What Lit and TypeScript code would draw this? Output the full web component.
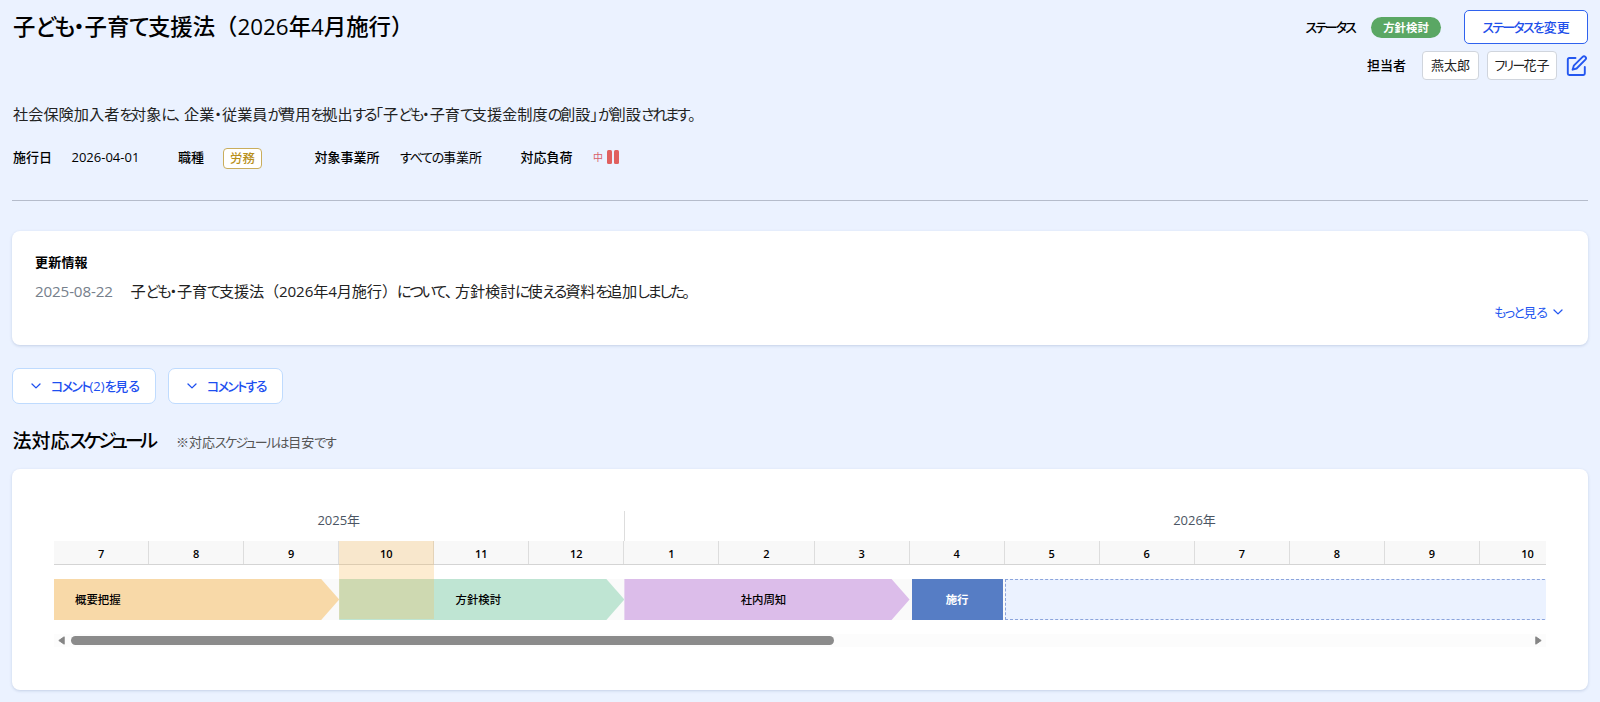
import { LitElement, html, css, svg } from "lit";
import { customElement } from "lit/decorators.js";
import { classMap } from "lit/directives/class-map.js";

// Kana and Japanese punctuation are set tighter than kanji, so each run gets its own span.
const RUNS = /([\u3040-\u309f]+|[\u30a0-\u30fa\u30fc-\u30ff]+|\u30fb|[\u300c\u300d]|\u3001)/;
const runClass = (run: string) => {
  if (/^[\u3040-\u309f]/.test(run)) return "hira";
  if (/^[\u30a0-\u30fa\u30fc-\u30ff]/.test(run)) return "kata";
  if (/^[\u30fb\u300c\u300d]/.test(run)) return "tight";
  if (run[0] === "\u3001") return "comma";
  return "";
};
const jp = (text: string) =>
  text
    .split(RUNS)
    .filter((run) => run !== "")
    .map((run) => (runClass(run) ? html`<span class=${runClass(run)}>${run}</span>` : run));

const chevron = html`<svg class="chevron" viewBox="0 0 10 6">
  ${svg`<path d="M1 1l4 3.9L9 1" fill="none" stroke="currentColor" stroke-width="1.3" stroke-linecap="round" stroke-linejoin="round"/>`}
</svg>`;

const MONTHS = [7, 8, 9, 10, 11, 12, 1, 2, 3, 4, 5, 6, 7, 8, 9, 10];

@customElement("app-root")
export class AppRoot extends LitElement {
  static styles = css`
    :host {
      display: block;
      box-sizing: border-box;
      height: 702px;
      overflow: hidden;
      padding: 10px 12px 0 12px;
      background: #ebf2ff;
      color: #000;
      font-family: "Open Sans", "Noto Sans CJK JP", sans-serif;
      font-size: 13px;
      line-height: 20px;
      white-space: nowrap;
    }
    * { box-sizing: border-box; }
    .hira, .kata, .tight { font-feature-settings: "palt"; }
    .hira { letter-spacing: -0.1em; }
    .kata { letter-spacing: -0.155em; }
    .comma { letter-spacing: -0.33em; }
    .header { display: flex; justify-content: space-between; height: 92px; padding-left: 1px; }
    h1 { margin: 0; font-size: 22.4px; line-height: 34px; font-weight: 500; }
    h1 .hira { letter-spacing: -0.09em; }
    .side { display: flex; flex-direction: column; align-items: flex-end; gap: 7px; }
    .row { display: flex; align-items: center; }
    .status-label { width: 65.5px; font-weight: 500; }
    .pill {
      width: 70px; height: 21px; margin-right: 23px; border-radius: 11px; background: #5aa764;
      color: #fff; font-weight: 700; font-size: 11.4px; line-height: 22px; text-align: center;
    }
    .change {
      width: 124px; height: 34px; border: 1px solid #2f62ee; border-radius: 5px; background: #fff;
      color: #1f50ea; text-align: center; line-height: 32px; font-weight: 500;
    }
    .change .kata { letter-spacing: -0.135em; }
    .person-label { width: 55px; font-weight: 500; line-height: 18px; padding-bottom: 2px; }
    .chip {
      height: 29px; border: 1px solid #d0d5dd; border-radius: 4px; background: #fff;
      text-align: center; line-height: 27px; margin-right: 8px; color: #222;
    }
    .chip.a { width: 57px; }
    .chip.b { width: 70px; }
    .chip .kata { letter-spacing: -0.13em; }
    .edit { width: 22px; height: 22px; margin: 0 0 0 1px; color: #2457f0; display: block; }
    .desc { font-size: 15.2px; line-height: 24px; color: #222; padding-left: 1px; }
    .desc .hira { letter-spacing: -0.15em; }
    .meta { display: flex; align-items: center; height: 22px; margin-top: 20px; padding-left: 1px; }
    .meta b { font-weight: 500; }
    .m1 { width: 58.5px; } .m2 { width: 106.5px; } .m3 { width: 45px; }
    .m4 { width: 91.5px; } .m5 { width: 85.5px; } .m6 { width: 120.5px; } .m7 { width: 72.5px; }
    .tag {
      display: block; width: 39px; height: 21px; margin-top: 2px; border: 1px solid #c9ad5c; border-radius: 4px; background: #fff;
      color: #b8901c; font-size: 12.4px; line-height: 19px; text-align: center; font-weight: 500;
    }
    .load { display: flex; align-items: center; gap: 2px; color: #d9606a; font-size: 10px; }
    .load span { width: 12px; }
    .load i { width: 5px; height: 13.5px; border-radius: 1.5px; background: #e0605f; }
    hr { margin: 32px 0 30px; border: 0; height: 1px; background: #b5bccb; }
    .card { background: #fff; border-radius: 8px; box-shadow: 0 1px 3px rgba(60, 90, 140, 0.22); }
    .news { height: 114px; padding: 21px 25.5px 0 23px; }
    .news-title { font-weight: 700; letter-spacing: 0.2px; }
    .news-line { display: flex; font-size: 15.2px; line-height: 24px; margin-top: 7px; color: #222; letter-spacing: -0.15px; }
    .news-line .hira { letter-spacing: -0.145em; }
    .date { width: 95.5px; color: #76808c; }
    .more { display: flex; justify-content: flex-end; align-items: center; gap: 6px; color: #2457f0; line-height: 18px; }
    .more .hira { letter-spacing: -0.12em; }
    .chevron { width: 10px; height: 6px; display: block; overflow: visible; }
    .actions { display: flex; gap: 12px; margin-top: 23px; }
    .action {
      display: flex; align-items: center; height: 35.5px; padding: 0 0 0 18px; gap: 10px;
      border: 1px solid #bfdbfe; border-radius: 7px; background: #fff; color: #1d4ff0; font-weight: 500;
    }
    .action .kata { letter-spacing: -0.13em; }
    .action.a { width: 144px; }
    .action.b { width: 115px; }
    .section { display: flex; align-items: center; height: 30px; margin: 22px 0 13.5px; padding-left: 0.5px; }
    h2 { margin: 0; width: 163.5px; font-size: 19px; line-height: 30px; font-weight: 500; }
    h2 .kata { letter-spacing: -0.17em; }
    .note { color: #555; padding-top: 3px; }
    .note .kata { letter-spacing: -0.13em; }
    .schedule { height: 221px; padding: 42px 42px 0; }
    .scroller { overflow: hidden; }
    .canvas { position: relative; width: 1521px; }
    .years { display: flex; height: 30px; }
    .year { color: #4b5563; text-align: center; line-height: 19px; font-size: 13px; flex: none; }
    .y1 { width: 570.5px; border-right: 1px solid #ddd; }
    .y2 { width: 1140px; }
    .months { display: flex; height: 24px; background: #f8f8f8; border-bottom: 1px solid #d4d4d4; }
    .month {
      width: 95.07px; flex: none; text-align: center; font: 600 11px/25px "Open Sans", sans-serif;
      border-right: 1px solid #ddd;
    }
    .month.last { border-right: 0; }
    .month span { position: relative; z-index: 1; }
    .bars { display: flex; height: 41px; margin: 14px 0; background: #fafafa; font-size: 11.4px; line-height: 41px; font-weight: 500; }
    .bar { width: 285.2px; flex: none; text-align: center; clip-path: polygon(0 0, calc(100% - 18px) 0, 100% 50%, calc(100% - 18px) 100%, 0 100%); }
    .b1 { background: #f8d9a8; text-align: left; padding-left: 21px; }
    .b2 { background: #bfe5d3; padding-right: 7px; }
    .b3 { background: #dcbdea; padding-right: 7px; }
    .launch { width: 91px; flex: none; margin: 0 2px; background: #567dc5; color: #fff; text-align: center; font-weight: 700; }
    .after { flex: 1; border: 1px dashed #8ba4dc; background: #ebf2ff; }
    .now { position: absolute; top: 30px; bottom: 1px; left: 285.2px; width: 95.2px; background: rgba(248, 185, 85, 0.27); }
    .scrollbar { display: flex; align-items: center; height: 13px; padding: 0 4px; background: #fcfcfc; }
    .scrollbar svg { width: 7px; height: 9px; display: block; }
    .track { flex: 1; padding-left: 6px; }
    .thumb { width: 763px; height: 9px; border-radius: 5px; background: #8b8b8b; }
  `;

  render() {
    return html`
      <header class="header">
        <h1>${jp("子ども・子育て支援法（2026年4月施行）")}</h1>
        <div class="side">
          <div class="row">
            <div class="status-label">${jp("ステータス")}</div>
            <div class="pill">方針検討</div>
            <div class="change">${jp("ステータスを変更")}</div>
          </div>
          <div class="row">
            <div class="person-label">担当者</div>
            <div class="chip a">燕太郎</div>
            <div class="chip b">${jp("フリー花子")}</div>
            <svg class="edit" viewBox="0 0 22 22" fill="none" stroke="currentColor" stroke-width="1.9" stroke-linecap="round" stroke-linejoin="round">
              <path d="M9.5 3H3.2a1.4 1.4 0 0 0-1.4 1.4v14.2A1.4 1.4 0 0 0 3.2 20h14.2a1.4 1.4 0 0 0 1.4-1.4v-6.6" />
              <path d="M16.6 1.9a1.95 1.95 0 0 1 2.8 2.8L10.6 13.5l-4 1.2 1.2-4z" />
            </svg>
          </div>
        </div>
      </header>
      <div class="desc">${jp("社会保険加入者を対象に、企業・従業員が費用を拠出する「子ども・子育て支援金制度の創設」が創設されます。")}</div>
      <div class="meta">
        <b class="m1">施行日</b><span class="m2">2026-04-01</span>
        <b class="m3">職種</b><span class="m4"><span class="tag">労務</span></span>
        <b class="m5">対象事業所</b><span class="m6">${jp("すべての事業所")}</span>
        <b class="m7">対応負荷</b>
        <div class="load"><span>中</span><i></i><i></i></div>
      </div>
      <hr />
      <section class="card news">
        <div class="news-title">更新情報</div>
        <div class="news-line">
          <span class="date">2025-08-22</span>
          <span>${jp("子ども・子育て支援法（2026年4月施行）について、方針検討に使える資料を追加しました。")}</span>
        </div>
        <div class="more"><span>${jp("もっと見る")}</span>${chevron}</div>
      </section>
      <div class="actions">
        <div class="action a">${chevron}<span>${jp("コメント(2)を見る")}</span></div>
        <div class="action b">${chevron}<span>${jp("コメントする")}</span></div>
      </div>
      <div class="section">
        <h2>${jp("法対応スケジュール")}</h2>
        <span class="note">${jp("※対応スケジュールは目安です")}</span>
      </div>
      <section class="card schedule">
        <div class="scroller">
          <div class="canvas">
            <div class="years"><div class="year y1">2025年</div><div class="year y2">2026年</div></div>
            <div class="months">
              ${MONTHS.map((m, i) => html`<div class=${classMap({ month: true, last: i === MONTHS.length - 1 })}><span>${m}</span></div>`)}
            </div>
            <div class="bars">
              <div class="bar b1">概要把握</div>
              <div class="bar b2">方針検討</div>
              <div class="bar b3">社内周知</div>
              <div class="launch">施行</div>
              <div class="after"></div>
            </div>
            <div class="now"></div>
          </div>
        </div>
        <div class="scrollbar">
          <svg viewBox="0 0 7 9"><path d="M6.2.8v7.4L.8 4.5z" fill="#858585" stroke="#858585" stroke-linejoin="round" /></svg>
          <div class="track"><div class="thumb"></div></div>
          <svg viewBox="0 0 7 9"><path d="M.8.8v7.4l5.4-3.7z" fill="#858585" stroke="#858585" stroke-linejoin="round" /></svg>
        </div>
      </section>
    `;
  }
}
